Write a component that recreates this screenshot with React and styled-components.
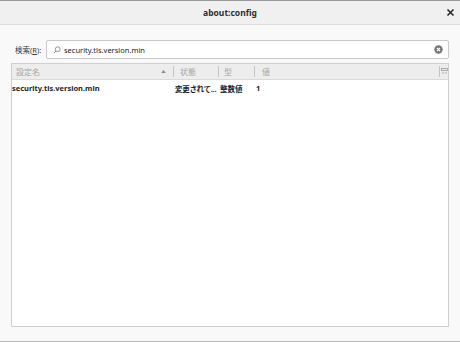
import React from "react";
import styled, { createGlobalStyle } from "styled-components";

const Global = createGlobalStyle`
  html, body { margin: 0; padding: 0; }
  body { width: 460px; height: 342px; overflow: hidden; font-family: "Noto Sans", "Noto Sans CJK JP", sans-serif; }
`;

const Window = styled.div`
  width: 460px;
  height: 342px;
  box-sizing: border-box;
  border-top: 1px solid #9a9a9a;
  border-bottom: 1px solid #b8b8b8;
  background: #f9f9f9;
  display: flex;
  flex-direction: column;
  position: relative;
`;

const TitleBar = styled.div`
  height: 23px;
  flex: none;
  background: #f0f0f0;
  border-bottom: 1px solid #dcdcdc;
  display: flex;
  align-items: center;
  justify-content: center;
  position: relative;
`;

const Title = styled.div`
  font-size: 8.5px;
  font-weight: 700;
  color: #2e2e2e;
`;

const Close = styled.div`
  position: absolute;
  right: 5px;
  top: 7px;
  width: 9px;
  height: 9px;
  display: flex;
`;

const Body = styled.div`
  flex: 1;
  display: flex;
  flex-direction: column;
  padding: 15px 11px 14px 11px;
  gap: 4px;
`;

const SearchRow = styled.div`
  display: flex;
  align-items: center;
  gap: 4px;
`;

const Label = styled.label`
  font-size: 7.5px;
  color: #3a3a3a;
  width: 31px;
  padding-left: 4px;
  box-sizing: border-box;
  u { text-decoration: underline; }
`;

const SearchBox = styled.div`
  flex: 1;
  height: 17px;
  box-sizing: content-box;
  border: 1px solid #c8c8c8;
  border-radius: 2px;
  background: #fff;
  display: flex;
  align-items: center;
  padding: 0 5px 0 6px;
  gap: 3px;
`;

const SearchText = styled.span`
  flex: 1;
  font-size: 7.5px;
  color: #222;
`;

const Tree = styled.div`
  flex: 1;
  border: 1px solid #cfcfcf;
  background: #fff;
  display: flex;
  flex-direction: column;
`;

const Header = styled.div`
  height: 15px;
  background: #ededed;
  border-bottom: 1px solid #dadada;
  display: flex;
  align-items: center;
`;

const HeadCell = styled.div`
  width: ${(p) => p.w}px;
  flex: ${(p) => (p.grow ? 1 : "none")};
  height: 100%;
  box-sizing: border-box;
  display: flex;
  align-items: center;
  justify-content: space-between;
  padding-left: ${(p) => p.pl ?? 6}px;
  padding-right: ${(p) => p.pr ?? 4}px;
  font-size: 8px;
  color: #a6a6a6;
  position: relative;
  &::after {
    content: "";
    position: absolute;
    right: 0;
    top: 2px;
    bottom: 2px;
    width: 1px;
    background: #c4c4c4;
  }
`;

const Picker = styled.div`
  width: 8px;
  height: 100%;
  display: flex;
  align-items: center;
  justify-content: center;
`;

const Row = styled.div`
  height: 16px;
  display: flex;
  align-items: center;
`;

const Cell = styled.div`
  width: ${(p) => p.w}px;
  flex: none;
  box-sizing: border-box;
  padding-left: ${(p) => p.pl ?? 2}px;
  font-size: 7.5px;
  letter-spacing: ${(p) => (p.tight ? "-0.3px" : "0")};
  font-weight: 700;
  color: #1e1e1e;
  white-space: nowrap;
  overflow: hidden;
`;

const Grip = styled.div`
  position: absolute;
  right: 1px;
  bottom: 1px;
  width: 4px;
  height: 4px;
  background-image: radial-gradient(#bbb 0.6px, transparent 0.7px);
  background-size: 2px 2px;
`;

export default function App() {
  return (
    <>
      <Global />
      <Window>
        <TitleBar>
          <Title>about:config</Title>
          <Close>
            <svg width="9" height="9" viewBox="0 0 9 9">
              <path d="M1.5 1.5 L7.5 7.5 M7.5 1.5 L1.5 7.5" stroke="#222" strokeWidth="1.5" />
            </svg>
          </Close>
        </TitleBar>
        <Body>
          <SearchRow>
            <Label>
              検索(<u>R</u>):
            </Label>
            <SearchBox>
              <svg width="8" height="8" viewBox="0 0 9 9">
                <circle cx="5.3" cy="3.7" r="2.7" fill="none" stroke="#8a8a8a" strokeWidth="1" />
                <path d="M3.4 5.6 L1 8" stroke="#8a8a8a" strokeWidth="1.1" />
              </svg>
              <SearchText>security.tls.version.min</SearchText>
              <svg width="9" height="9" viewBox="0 0 9 9">
                <circle cx="4.5" cy="4.5" r="4.2" fill="#777" />
                <path d="M3 3 L6 6 M6 3 L3 6" stroke="#fff" strokeWidth="1.1" />
              </svg>
            </SearchBox>
          </SearchRow>
          <Tree>
            <Header>
              <HeadCell w={162} pl={4} pr={8}>
                <span>設定名</span>
                <svg width="5" height="3" viewBox="0 0 6 4">
                  <path d="M0 4 L3 0 L6 4 Z" fill="#8a8a8a" />
                </svg>
              </HeadCell>
              <HeadCell w={45} pl={6}>
                <span>状態</span>
              </HeadCell>
              <HeadCell w={36} pl={5}>
                <span>型</span>
              </HeadCell>
              <HeadCell grow pl={7}>
                <span>値</span>
              </HeadCell>
              <Picker>
                <svg width="7" height="7" viewBox="0 0 7 7">
                  <rect x="0.5" y="0.5" width="6" height="2" fill="none" stroke="#999" strokeWidth="0.8" />
                  <path d="M1 4.5 L3 4.5 L2 6 Z M4 4.5 L6 4.5 L5 6 Z" fill="#999" />
                </svg>
              </Picker>
            </Header>
            <Row>
              <Cell w={162} pl={0}>security.tls.version.min</Cell>
              <Cell w={45} pl={1} tight>変更されて...</Cell>
              <Cell w={37} pl={1}>整数値</Cell>
              <Cell w={60} pl={0}>1</Cell>
            </Row>
          </Tree>
        </Body>
        <Grip />
      </Window>
    </>
  );
}
